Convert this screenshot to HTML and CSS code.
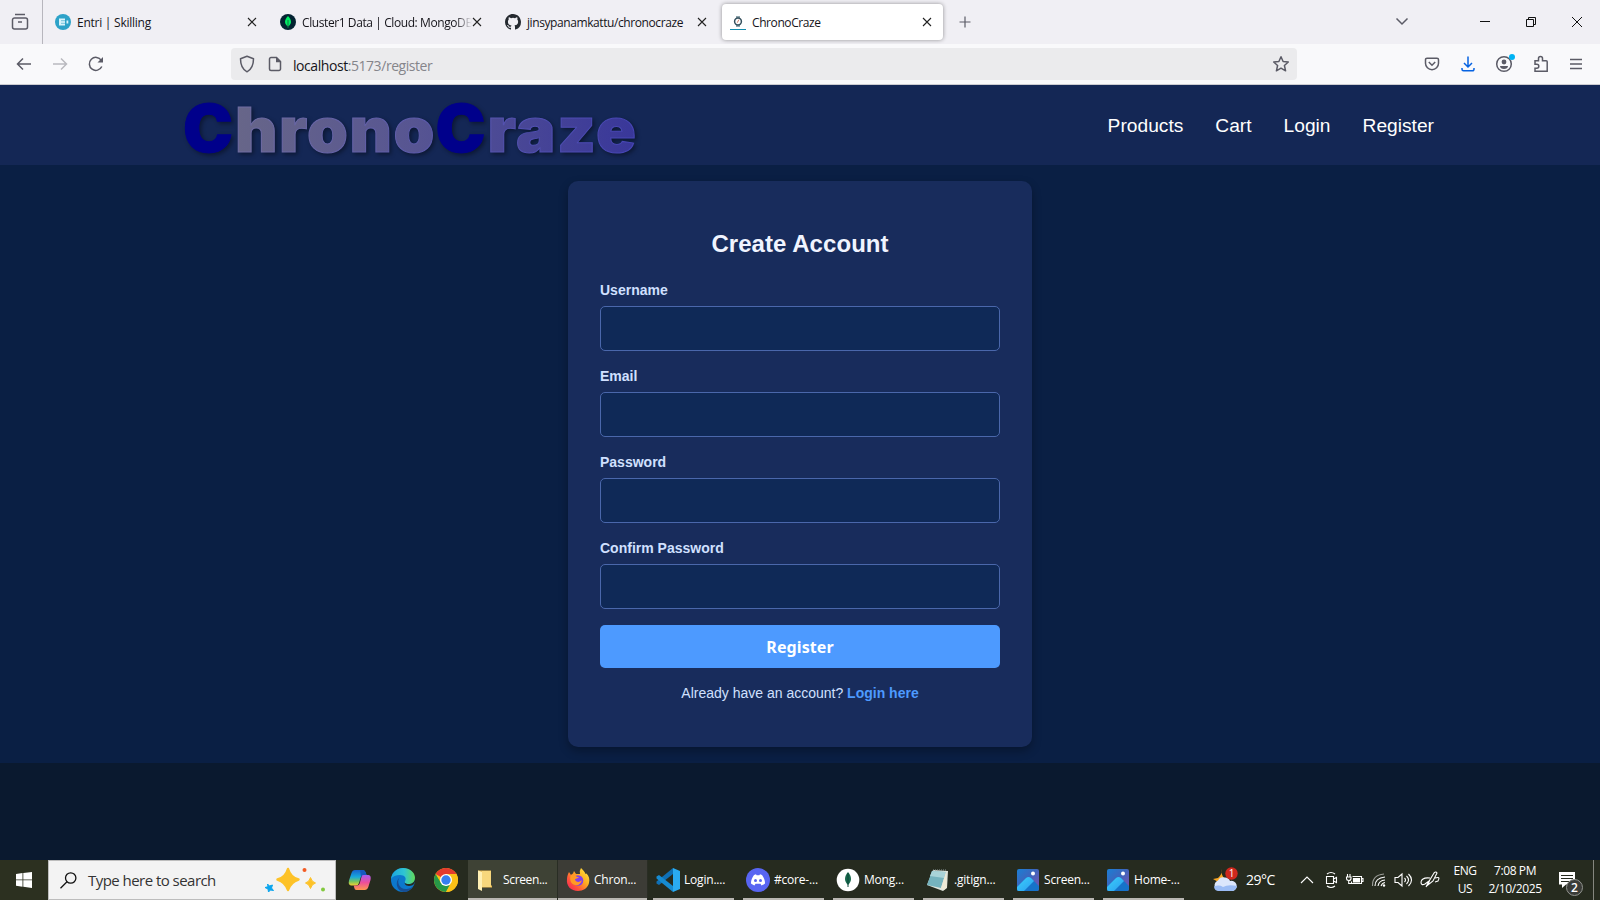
FILE: index.html
```html
<!DOCTYPE html>
<html lang="en">
<head>
<meta charset="utf-8">
<title>ChronoCraze</title>
<link rel="stylesheet" href="styles.css">
</head>
<body>
<div class="tabs">
  <div class="tabs-view"><svg width="18" height="18" viewBox="0 0 18 18" class="line"><path d="M4 1.500h10M3.500 5h11a2 2 0 0 1 2 2v7a2 2 0 0 1-2 2h-11a2 2 0 0 1-2-2V7a2 2 0 0 1 2-2zM7 9h4"/></svg></div>
  <div class="tab">
    <svg width="16" height="16" viewBox="0 0 16 16"><circle cx="8" cy="8" r="8" fill="#2da2c8"/><path d="M4 4.500h6v7H4z" fill="#d9f3fa"/><path d="M6 6.700h4M6 9.300h4" stroke="#2da2c8" stroke-width=".6"/><path d="M11.500 6.500h1.800v3h-1.800z" fill="#d9f3fa"/></svg>
    <span class="tab-title t1">Entri | Skilling</span>
    <svg class="close" width="10" height="10" viewBox="0 0 10 10"><path d="M1 1l8 8M9 1l-8 8"/></svg>
  </div>
  <div class="tab">
    <svg width="16" height="16" viewBox="0 0 16 16"><circle cx="8" cy="8" r="8" fill="#032331"/><path d="M8 2c4 4 4 8 0 10.500C4 10 4 6 8 2z" fill="#00ed64"/><path d="M8 6v8" stroke="#0a7a45"/></svg>
    <span class="tab-title fade t2">Cluster1 Data | Cloud: MongoDB</span>
    <svg class="close" width="10" height="10" viewBox="0 0 10 10"><path d="M1 1l8 8M9 1l-8 8"/></svg>
  </div>
  <div class="tab">
    <svg width="16" height="16" viewBox="0 0 16 16"><path fill="#24292f" d="M8 0C3.58 0 0 3.58 0 8c0 3.54 2.29 6.53 5.47 7.59.4.07.55-.17.55-.38 0-.19-.01-.82-.01-1.49-2.01.37-2.53-.49-2.69-.94-.09-.23-.48-.94-.82-1.13-.28-.15-.68-.52-.01-.53.63-.01 1.08.58 1.23.82.72 1.21 1.87.87 2.33.66.07-.52.28-.87.51-1.07-1.78-.2-3.64-.89-3.64-3.95 0-.87.31-1.59.82-2.15-.08-.2-.36-1.02.08-2.12 0 0 .67-.21 2.2.82a7.5 7.5 0 0 1 4 0c1.53-1.04 2.2-.82 2.2-.82.44 1.1.16 1.92.08 2.12.51.56.82 1.27.82 2.15 0 3.07-1.87 3.75-3.65 3.95.29.25.54.73.54 1.48 0 1.07-.01 1.93-.01 2.2 0 .21.15.46.55.38A8.01 8.01 0 0 0 16 8c0-4.42-3.58-8-8-8z"/></svg>
    <span class="tab-title t3">jinsypanamkattu/chronocraze</span>
    <svg class="close" width="10" height="10" viewBox="0 0 10 10"><path d="M1 1l8 8M9 1l-8 8"/></svg>
  </div>
  <div class="tab active">
    <svg width="16" height="16" viewBox="0 0 16 16"><path d="M6 2h4v11H6z" fill="#8fa6ae"/><circle cx="8" cy="7.500" r="3.400" fill="#fff" stroke="#344f5c" stroke-width="1.500"/><path d="M7.300 8.700l1.500-3" stroke="#cf7d68"/><path d="M0 15.500h16" stroke="#138cad"/></svg>
    <span class="tab-title t4">ChronoCraze</span>
    <svg class="close" width="10" height="10" viewBox="0 0 10 10"><path d="M1 1l8 8M9 1l-8 8"/></svg>
  </div>
  <svg class="line plus" width="12" height="12" viewBox="0 0 12 12"><path d="M6 .5v11M.5 6h11"/></svg>
  <div class="window-controls">
    <svg class="chev" width="14" height="10" viewBox="0 0 14 10"><path d="M1.500 1.500L7 7l5.500-5.500"/></svg>
    <svg width="10" height="10" viewBox="0 0 10 10"><path d="M0 4.500h10"/></svg>
    <svg width="10" height="10" viewBox="0 0 10 10"><path d="M.5 2.500h7v7h-7zM2.500 2.500v-2h7v7h-2"/></svg>
    <svg width="10" height="10" viewBox="0 0 10 10"><path d="M0 0l10 10M10 0L0 10"/></svg>
  </div>
</div>
<div class="toolbar">
  <div class="nav-buttons">
    <svg class="line" width="16" height="14" viewBox="0 0 16 14"><path d="M15 7H2M7 1.500L1.500 7 7 12.500"/></svg>
    <svg class="line dim" width="16" height="14" viewBox="0 0 16 14"><path d="M1 7h13M9 1.500L14.500 7 9 12.500"/></svg>
    <svg class="line" width="16" height="16" viewBox="0 0 16 16"><path d="M13.800 10.500A6.500 6.500 0 1 1 13.300 4.300"/><path d="M15 1v5.500H9.500z" fill="#5b5b66" stroke="none"/></svg>
  </div>
  <div class="urlbar">
    <svg class="line" width="16" height="18" viewBox="0 0 16 18"><path d="M8 1.300l6.500 2.500c0 6-1.500 10.500-6.500 13-5-2.500-6.500-7-6.500-13z" stroke-linejoin="round"/></svg>
    <svg class="line page" width="14" height="16" viewBox="0 0 14 16"><path d="M3 1.500h5.500l4 4V13a1.500 1.500 0 0 1-1.500 1.500H3A1.500 1.500 0 0 1 1.500 13V3A1.500 1.500 0 0 1 3 1.500z"/><path d="M8 1l5.200 5.200H8z" fill="#5b5b66" stroke="none"/></svg>
    <span class="url">localhost<span>:5173/register</span></span>
    <svg class="line star" width="18" height="18" viewBox="0 0 18 18"><path stroke-linejoin="round" d="M9 1.800l2.100 4.700 5.200.5-3.900 3.500 1.200 5.300L9 13.200l-4.600 2.600 1.200-5.300L1.700 7l5.200-.5z"/></svg>
  </div>
  <div class="tools">
    <svg class="line" width="16" height="14" viewBox="0 0 16 14"><path d="M3 1.200h10a1.500 1.500 0 0 1 1.500 1.500v3.500a6.500 6.500 0 0 1-13 0V2.700A1.500 1.500 0 0 1 3 1.200zM4.800 5L8 8.200 11.200 5"/></svg>
    <svg class="line blue" width="16" height="16" viewBox="0 0 16 16"><path d="M8 .5v10M4 7l4 4 4-4M2 12v1.300a1.500 1.500 0 0 0 1.500 1.500h9A1.500 1.500 0 0 0 14 13.300V12"/></svg>
    <svg class="account" width="20" height="20" viewBox="0 0 20 20"><circle cx="9" cy="11" r="7.300" fill="none" stroke="#5b5b66" stroke-width="1.500"/><circle cx="9" cy="9" r="2.400" fill="#5b5b66"/><path d="M5 13h8c0 1.700-1.600 3-4 3s-4-1.300-4-3z" fill="#5b5b66"/><circle cx="17" cy="4" r="3" fill="#00b3f4"/></svg>
    <svg class="line puzzle" width="16" height="18" viewBox="0 0 16 18"><path d="M2 5.700h3.500V3.500a2 2 0 0 1 4 0v2.200h3.700a1 1 0 0 1 1 1v9.600H2v-3h1.800a2 2 0 0 0 0-4H2z"/></svg>
    <svg class="line" width="12" height="12" viewBox="0 0 12 12"><path d="M0 1.500h12M0 6h12M0 10.500h12"/></svg>
  </div>
</div>
<header class="site-header">
  <svg class="logo" width="460" height="80" viewBox="0 0 460 80">
    <defs><linearGradient id="logo-fill" gradientUnits="userSpaceOnUse" x1="0" y1="0" x2="460" y2="0"><stop offset="0" stop-color="#6c6b86"/><stop offset=".5" stop-color="#575592"/><stop offset="1" stop-color="#38369a"/></linearGradient>
    <linearGradient id="logo-edge" gradientUnits="userSpaceOnUse" x1="0" y1="0" x2="460" y2="0"><stop offset="0" stop-color="#7572a0"/><stop offset="1" stop-color="#4544b6"/></linearGradient></defs>
    <g fill="url(#logo-fill)" stroke="url(#logo-edge)" stroke-width="1">
      <text x="0" y="67" textLength="50" lengthAdjust="spacingAndGlyphs" fill="#00008b" stroke="#00008b">C</text>
      <text class="small" x="52" y="66.500" textLength="201" lengthAdjust="spacingAndGlyphs">hrono</text>
      <text x="252.500" y="67" textLength="50" lengthAdjust="spacingAndGlyphs" fill="#00008b" stroke="#00008b">C</text>
      <text class="small" x="304.500" y="66.500" textLength="150" lengthAdjust="spacingAndGlyphs">raze</text>
    </g>
  </svg>
  <nav class="site-nav"><a>Products</a><a>Cart</a><a>Login</a><a>Register</a></nav>
</header>
<main class="main">
  <form class="card">
    <h2>Create Account</h2>
    <label>Username</label><input type="text">
    <label>Email</label><input type="text">
    <label>Password</label><input type="password">
    <label>Confirm Password</label><input type="password">
    <button type="button">Register</button>
    <p>Already have an account? <a>Login here</a></p>
  </form>
</main>
<div class="below"></div>
<footer class="taskbar">
  <div class="start"><svg width="16" height="16" viewBox="0 0 16 16" fill="#fff"><path d="M0 2l6.500-.9v6.400H0zM7.300 1L16 0v7.500H7.300zM0 8.300h6.500v6.400L0 13.800zM7.300 8.300H16V16l-8.700-1.200z"/></svg></div>
  <div class="search">
    <svg width="17" height="17" viewBox="0 0 17 17" fill="none" stroke="#111" stroke-width="1.300"><circle cx="10.700" cy="6" r="5.200"/><path d="M7 9.700L.5 16.200"/></svg>
    <span>Type here to search</span>
    <svg width="62" height="26" viewBox="0 0 62 26"><path d="M24 2q2.500 8.500 10.500 10.500Q26.500 15 24 23q-2.500-8-10.500-10.500Q21.500 10.500 24 2z" fill="#fdc228" stroke="#fdc228" stroke-width="2.500" stroke-linejoin="round"/><path d="M46.500 10.500q1.200 4.500 5 5.500-3.800 1-5 5.500-1.200-4.500-5-5.500 3.800-1 5-5.500z" fill="#fdc228" stroke="#fdc228"/><path d="M3.500 17l2 2 3-1-1 3 2 2.500-3-.5L4.500 25 4 22l-3-1.500 3-.8z" fill="#0aa5ee" stroke="#0aa5ee"/><circle cx="40.500" cy="3" r="2" fill="#f35b24"/><circle cx="59" cy="22.500" r="2" fill="#82c93e"/></svg>
  </div>
  <div class="pins">
    <svg width="24" height="24" viewBox="0 0 24 24"><defs><linearGradient id="cp1" x2="0" y2="1"><stop stop-color="#1762cf"/><stop offset=".45" stop-color="#18a9dc"/><stop offset=".75" stop-color="#79c65d"/><stop offset="1" stop-color="#f5d032"/></linearGradient><linearGradient id="cp2" x2="0" y2="1"><stop stop-color="#a75cf0"/><stop offset=".5" stop-color="#ee4e9b"/><stop offset="1" stop-color="#ff974f"/></linearGradient></defs><path d="M7 2h8q2 0 2.700 2.500L18.500 7h-3q-2 0-2.700 2L11 15q-.8 2.500-3 2.500H3q-3-.5-2-5L3.500 5Q4.500 2 7 2z" fill="url(#cp1)"/><path d="M14 7h6.500q3 .5 2 5L20.300 19q-1 3-3.500 3H8.500q-2 0-2.300-2.500l-.5-2H9q2 0 2.700-2z" fill="url(#cp2)"/><path d="M12 2h3q2 0 2.700 2.500L18.500 7h-3q-1.700 0-2.500 2z" fill="#1758bf"/></svg>
    <svg width="24" height="24" viewBox="0 0 24 24"><defs><linearGradient id="ed" x2="1"><stop stop-color="#1aa5df"/><stop offset=".55" stop-color="#2fc4d3"/><stop offset="1" stop-color="#62d957"/></linearGradient></defs><circle cx="12" cy="12" r="12" fill="#0c78cd"/><path d="M0 11C1 4 6 0 12 0c7 0 12 4.500 12 10 0 4-3 6-6.500 6-3 0-4.500-1.200-3.500-2.800 2-3.200-.5-6.200-5-6.200C5 7 1.500 8.500 0 11z" fill="url(#ed)"/><path d="M9 9c-4 4-1 13 7 12 3-.3 5-1.500 6.300-3C20 22 16.500 24 12.500 24 6 23 3 14 9 9z" fill="#174e93"/><path d="M14 13c-1 2 0 5 4 5 2 0 4-1 4.500-1.500L24 14V10c0 4-3 6-6.500 6-3 0-4.500-1.200-3.500-3z" fill="#262b20"/></svg>
    <svg width="24" height="24" viewBox="0 0 24 24"><circle cx="12" cy="12" r="12" fill="#fbc116"/><path d="M12 12L1.600 6A12 12 0 0 1 22.400 6H12z" fill="#e33b2e"/><path d="M1.600 6L7 15l5 3-3 5.600A12 12 0 0 1 1.600 6z" fill="#279847"/><path d="M7 15l5 3 5-3-5 9A12 12 0 0 1 9 23.600z" fill="#279847"/><path d="M17 15l-5 9A12 12 0 0 0 22.400 6H12z" fill="#fbc116"/><circle cx="12" cy="12" r="6" fill="#fff"/><circle cx="12" cy="12" r="4.700" fill="#367ff0"/></svg>
  </div>
  <div class="tasks">
    <div class="task open folder"><svg width="24" height="24" viewBox="0 0 24 24"><path d="M2 2.500h13v15h1v2H6z" fill="#e9bb55"/><path d="M6 3h9v16H6z" fill="#f7d77c"/><path d="M2 2.500l4 1.500V23l-4-2z" fill="#fff0b4"/></svg><span>Screen...</span></div>
    <div class="task open"><svg width="24" height="24" viewBox="0 0 24 24"><defs><linearGradient id="ff" x1="1" x2="0" y2="1"><stop stop-color="#fff147"/><stop offset=".4" stop-color="#ffad20"/><stop offset=".7" stop-color="#ff543b"/><stop offset="1" stop-color="#f01862"/></linearGradient></defs><path d="M15 0c2 2 4 4 4.500 6l1-.5C23 8 24 11 23 15c-1 5-6 8-11 8C5 23 0 18 1 11 1 8 2 6 3 4l2 3q.5-1 2-1.500L8 3l2 3h4q-1-3 1-6z" fill="url(#ff)"/><circle cx="12" cy="12.500" r="5.300" fill="#8140e8"/><path d="M5 7q4-1 6 2h2c-1 2-4 1-4 3 2 3 5 2 7 0-1 4-4 6-7 5-4-1-6-5-4-10z" fill="#ff9b24"/></svg><span>Chron...</span></div>
    <div class="task"><svg width="24" height="24" viewBox="0 0 24 24"><path d="M17 0v6L3 17l-2.500-1.500v-2z" fill="#0f70b5"/><path d="M17 24v-6L3 7 .5 8.500v2z" fill="#168bd1"/><path d="M17 0l7 3v18l-7 3z" fill="#2aabf2"/></svg><span>Login....</span></div>
    <div class="task"><svg width="24" height="24" viewBox="0 0 24 24"><circle cx="12" cy="12" r="12" fill="#5865f2"/><path d="M8 7l2-.8.6 1h2.800l.6-1L16 7c2 2.500 3.200 6 3 8.600-1 .9-2 1.400-3.500 1.800l-1-1.600h-5l-1 1.600C7 17 6 16.500 5 15.600 4.800 13 6 9.500 8 7z" fill="#fff"/><circle cx="9.500" cy="12.500" r="1.500" fill="#5865f2"/><circle cx="14.500" cy="12.500" r="1.500" fill="#5865f2"/></svg><span>#core-...</span></div>
    <div class="task"><svg width="24" height="24" viewBox="0 0 24 24"><circle cx="12" cy="12" r="11.300" fill="#fff"/><path d="M12 4c4 5 4 9 0 13-4-4-4-8 0-13z" fill="#17694c"/><path d="M12 5v14" stroke="#0b4639"/></svg><span>Mong...</span></div>
    <div class="task"><svg width="24" height="24" viewBox="0 0 24 24"><path d="M7 2l15 1-1 17-4 3L1 17z" fill="#e0e5dd"/><path d="M6 3l14 1-5 16-14-3z" fill="#75b3be"/><path d="M6 3l14 1-2 6-14-2z" fill="#a9d3d8"/><path d="M20 4l1 15-3 3-3-2z" fill="#eee9d6"/><path d="M7 2h14" stroke="#8d9a99" stroke-dasharray="1 1"/></svg><span>.gitign...</span></div>
    <div class="task"><svg width="24" height="24" viewBox="0 0 24 24"><defs><linearGradient id="ph" x2="1" y2="1"><stop stop-color="#1a7fd5"/><stop offset=".45" stop-color="#3d65bd"/><stop offset="1" stop-color="#8351b0"/></linearGradient><linearGradient id="hill" x2="1" y2="1"><stop stop-color="#3cd0fa"/><stop offset="1" stop-color="#2a9df0"/></linearGradient></defs><rect x="1" y="1" width="22" height="22" rx="2" fill="url(#ph)"/><path d="M1 19l9-9q2.500-2 5 0l8 8v3q0 2-2 2H3q-2 0-2-2z" fill="#1673ca"/><path d="M1 19l9-9q2.500-2 5 0l3 3L8 23H3q-2 0-2-2z" fill="url(#hill)"/><circle cx="17" cy="5.500" r="2" fill="#fff"/></svg><span>Screen...</span></div>
    <div class="task"><svg width="24" height="24" viewBox="0 0 24 24"><rect x="1" y="1" width="22" height="22" rx="2" fill="url(#ph)"/><path d="M1 19l9-9q2.500-2 5 0l8 8v3q0 2-2 2H3q-2 0-2-2z" fill="#1673ca"/><path d="M1 19l9-9q2.500-2 5 0l3 3L8 23H3q-2 0-2-2z" fill="url(#hill)"/><circle cx="17" cy="5.500" r="2" fill="#fff"/></svg><span>Home-...</span></div>
  </div>
  <div class="weather">
    <svg width="26" height="26" viewBox="0 0 26 26"><path d="M9 2c-1 4 0 8 4 10l-6 4-7-4 5-1q4-3 4-9z" fill="#f9a824"/><path d="M6 24a5.500 5.500 0 0 1-1-10.500Q7 9 12 10.500q4 0 5 3.500a5 5 0 0 1 3 10z" fill="#dbe6fc"/><path d="M6 24a5 5 0 0 1-5-4.500q5-2 9 .5 5-3 14-1-1 5-5.500 5z" fill="#9bbcf5"/><circle cx="18.500" cy="6.500" r="6.200" fill="#cf281e"/><text x="18.500" y="10" text-anchor="middle" class="badge-text">1</text></svg>
    <span>29°C</span>
  </div>
  <div class="tray">
    <svg width="24" height="20" viewBox="0 0 24 20"><path d="M6 13l6-6 6 6"/></svg>
    <svg width="24" height="20" viewBox="0 0 24 20"><path d="M7.500 6.500h7v7h-7zM14.500 9l3-1.500v5l-3-1.500M8 4q4-3 8 0M8 16q4 3 8 0"/></svg>
    <svg width="24" height="20" viewBox="0 0 24 20"><path d="M9.500 6.500h9v7h-10v-2M18.500 8.500h1.500v3h-1.500M4.500 4v3M7 4v3M3.500 7h4.500v1.500q0 2-2.200 2t-2.300-2zM5.700 10.500v3H8"/><path d="M10.500 8.500h6v3.500h-6z" fill="#fff"/></svg>
    <svg width="24" height="20" viewBox="0 0 24 20"><path d="M8 16Q8 8 18 7M11 16q1-5.500 7-6M14 16q1-3 4-3.500"/><circle cx="17" cy="15.500" r="1.200" fill="#fff" stroke="none"/><path d="M5.500 16Q5 5 17 4" opacity=".55"/></svg>
    <svg width="24" height="20" viewBox="0 0 24 20"><path d="M4 7.500h3L11 4v12l-4-3.500H4zM13.500 8q2 2 0 4M15.500 6q4 4 0 8M17.500 4q6 6 0 12"/></svg>
    <svg width="32" height="20" viewBox="0 0 32 20"><path d="M13 15l1.500-4.500L19 3q2-2 3 0l-4 8zM15 8q-8-1-9 4 0 4 4 2l4-3-3 6M20 8q6-2 3 3l-3 1"/></svg>
  </div>
  <div class="stack lang"><span>ENG</span><span>US</span></div>
  <div class="stack clock"><span>7:08 PM</span><span>2/10/2025</span></div>
  <div class="notes"><svg width="26" height="26" viewBox="0 0 26 26"><path d="M1 1h16v12.500H8L4 17v-3.500H1z" fill="#fff"/><path d="M3 4.500h12M3 7.500h12M3 10.500h8" stroke="#262b20" stroke-width="1.100"/><circle cx="16.500" cy="16.500" r="8" fill="#3a3c38" stroke="#92948f"/><text x="16.500" y="20.500" text-anchor="middle" class="note-text">2</text></svg></div>
  <div class="peek"></div>
</footer>
</body>
</html>
```

FILE: styles.css
```css
* { box-sizing: border-box; }
body { margin: 0; width: 1600px; height: 900px; overflow: hidden; display: flex; flex-direction: column; background: #0a192f; font-family: "Liberation Sans", Arial, sans-serif; }
svg { display: block; flex: none; }
.line { fill: none; stroke: #5b5b66; stroke-width: 1.5; }
.tabs, .toolbar, .taskbar { font-family: "Open Sans", "Noto Sans", sans-serif; flex: none; }
.tabs { height: 44px; background: #f0eff4; display: flex; align-items: center; font-size: 12px; color: #15141a; }
.tabs-view { width: 43px; height: 44px; border-right: 1px solid #b7b6bd; display: flex; align-items: center; padding-left: 11px; margin-right: 4px; }
.tab { width: 225px; height: 44px; display: flex; align-items: center; padding: 0 15px 0 8px; }
.tab-title { flex: 1; min-width: 0; margin-left: 6px; padding-top: 1px; white-space: nowrap; }
.t1 { letter-spacing: -.25px; }
.t2 { letter-spacing: -.41px; }
.t3, .t4 { letter-spacing: -.41px; }
.fade { -webkit-mask-image: linear-gradient(90deg, #000 90%, transparent); mask-image: linear-gradient(90deg, #000 90%, transparent); }
.close { stroke: #222; stroke-width: 1.1; }
.tab.active { width: 221px; height: 36px; background: #fff; border-radius: 4px; box-shadow: 0 0 4px rgba(0,0,0,.4); padding-right: 11px; }
.plus { margin-left: 16px; stroke-width: 1.2; }
.window-controls { margin-left: auto; display: flex; align-items: center; padding-right: 18px; gap: 36px; stroke: #111; stroke-width: 1; fill: none; }
.window-controls .chev { stroke: #5b5b66; stroke-width: 1.5; margin-right: 35px; }
.toolbar { height: 41px; background: #f9f9fb; border-bottom: 1px solid #ccccd1; display: flex; align-items: center; }
.nav-buttons { width: 231px; padding-left: 16px; display: flex; align-items: center; gap: 20px; }
.dim { opacity: .4; }
.urlbar { width: 1066px; height: 32px; background: #ebebed; border-radius: 4px; display: flex; align-items: center; padding: 0 7px 0 8px; }
.page { margin-left: 13px; }
.url { font-size: 14px; color: #15141a; margin-left: 11px; padding-top: 2px; letter-spacing: -.44px; }
.url span { color: #85858b; }
.star { margin-left: auto; }
.tools { flex: 1; display: flex; align-items: center; justify-content: space-between; padding: 0 18px 0 127px; }
.puzzle { margin-left: -2px; margin-right: 2px; }
.blue { stroke: #0663e2; }
.account { margin-top: -3px; }
.site-header { height: 80px; flex: none; background: #142755; display: flex; justify-content: space-between; padding: 0 166px 0 183px; }
.logo { overflow: visible; font: 900 66px Inter, "Liberation Sans", sans-serif; filter: drop-shadow(2px 2px 2px rgba(0,0,0,.4)); }
.logo .small { font-size: 62px; letter-spacing: 1.5px; }
.site-nav { display: flex; gap: 32px; height: 82px; align-items: center; color: #fff; font-size: 19.2px; }
.main { height: 598px; flex: none; background: #0a1f44; padding-top: 16px; }
.card { width: 464px; height: 566px; margin: 0 auto; padding: 32px; background: #182c5c; border-radius: 10px; box-shadow: 0 4px 10px rgba(0,0,0,.3); display: flex; flex-direction: column; }
.card h2 { margin: 17px 0 24px; font-size: 24px; line-height: 28px; text-align: center; color: #f0f4ff; letter-spacing: .05px; }
.card label { font-size: 14px; line-height: 16px; margin: 0 0 8px; color: #d0e0ff; font-weight: bold; }
.card input { height: 45px; margin: 0 0 17px; background: #0f2957; border: 1px solid #4a67ab; border-radius: 5px; }
.card button { height: 43px; margin-top: -1px; flex: none; border: 0; border-radius: 5px; background: #4d9aff; color: #fff; font: bold 16px "Noto Sans", "Open Sans", sans-serif; padding: 0; letter-spacing: .1px; }
.card p { margin: 17px 0 0; text-align: center; font-size: 14px; line-height: 17px; color: #d0e0ff; }
.card p a { color: #4d9aff; font-weight: bold; }
.below { height: 97px; flex: none; background: #0a192f; }
.taskbar { height: 40px; background: #262b1f; color: #fff; display: flex; align-items: stretch; font-size: 12px; }
.start { width: 48px; display: flex; align-items: center; justify-content: center; background: #2c3020; }
.search { width: 288px; background: #f3f3f3; border: 1px solid #bdbdbd; display: flex; align-items: center; padding: 0 9px 0 11px; font-size: 15px; color: #333; }
.search span { margin-left: 11px; flex: 1; letter-spacing: -.54px; white-space: nowrap; }
.pins { width: 132px; padding-left: 12px; display: flex; align-items: center; gap: 19px; }
.tasks { display: flex; width: 720px; }
.task { width: 90px; position: relative; display: flex; align-items: center; gap: 4px; padding-left: 8px; white-space: nowrap; letter-spacing: -.2px; }
.task span { margin-top: -1px; }
.task::after { content: ""; position: absolute; left: 5px; right: 4px; bottom: 0; height: 2px; background: #b9b7b2; }
.task.open { background: #3c3c36; border-right: 1px solid #292d24; }
.task.open::after { left: 0; right: 0; }
.task.folder { background: #3e4235; gap: 3px; letter-spacing: -.35px; }
.weather { width: 106px; padding-left: 25px; display: flex; align-items: center; gap: 7px; font-size: 14px; letter-spacing: -.5px; }
.weather span { margin-top: -1px; }
.badge-text { font-size: 10px; fill: #fff; letter-spacing: 0; }
.tray { display: flex; width: 154px; align-items: center; padding-left: 1px; fill: none; stroke: #fff; stroke-width: 1.1; }
.stack { display: flex; flex-direction: column; align-items: center; justify-content: center; line-height: 18px; padding-bottom: 1px; letter-spacing: -.4px; }
.lang { width: 34px; }
.clock { width: 66px; }
.notes { width: 45px; padding: 11px 0 0 10px; }
.peek { width: 1px; background: #85877f; }
.note-text { font-size: 12px; font-weight: 600; fill: #fff; }
```
